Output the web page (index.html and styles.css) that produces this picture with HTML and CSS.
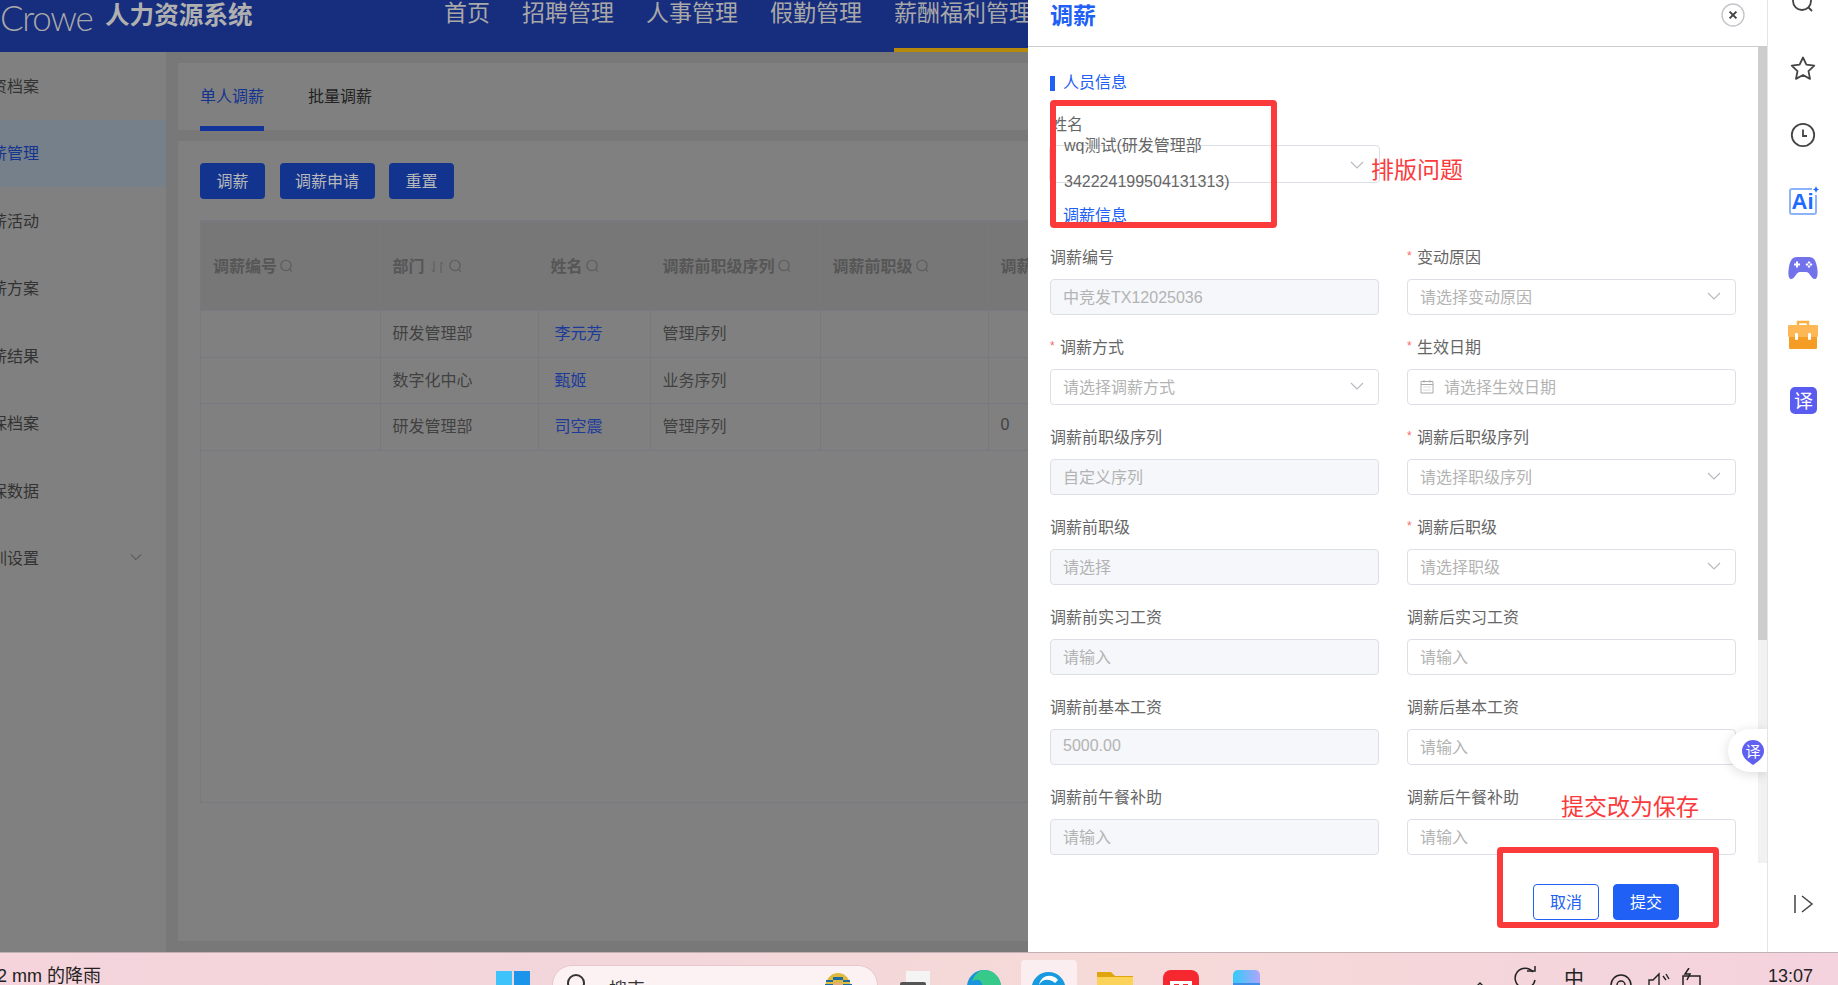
FILE: index.html
```html
<!DOCTYPE html>
<html lang="zh-CN">
<head>
<meta charset="utf-8">
<title>Crowe 人力资源系统</title>
<link rel="stylesheet" href="styles.css">
</head>
<body>
<svg class="defs" width="0" height="0">
  <symbol id="q" viewBox="0 0 14 14"><circle cx="6.500" cy="6" r="4.800" fill="none" stroke="currentColor" stroke-width="1.100"/><path d="M10 9.600l2 2.200" stroke="currentColor" stroke-width="1.100" fill="none"/></symbol>
  <symbol id="chev" viewBox="0 0 14 8"><path d="M1 1l6 6 6-6" fill="none" stroke="currentColor" stroke-width="1.100"/></symbol>
</svg>
<div class="screen">
  <div class="window">
    <div class="app">
      <header class="topbar">
        <div class="logo"><span class="crowe">Crowe</span><span class="sysname">人力资源系统</span></div>
        <nav class="nav">
          <a>首页</a><a>招聘管理</a><a>人事管理</a><a>假勤管理</a><a class="on">薪酬福利管理</a>
        </nav>
      </header>
      <div class="appbody">
        <aside class="side">
          <div class="side-item"><span>工资档案</span></div>
          <div class="side-item on"><span>调薪管理</span></div>
          <div class="side-item"><span>调薪活动</span></div>
          <div class="side-item"><span>调薪方案</span></div>
          <div class="side-item"><span>调薪结果</span></div>
          <div class="side-item"><span>社保档案</span></div>
          <div class="side-item"><span>社保数据</span></div>
          <div class="side-item"><span>培训设置</span><svg class="side-caret" width="12" height="8"><use href="#chev"/></svg></div>
        </aside>
        <main class="content">
          <div class="tabs card">
            <div class="tab on">单人调薪</div>
            <div class="tab">批量调薪</div>
          </div>
          <div class="panel card">
            <div class="actions">
              <button class="btn w65">调薪</button>
              <button class="btn w95">调薪申请</button>
              <button class="btn w65">重置</button>
            </div>
            <div class="tablewrap">
              <table class="grid">
                <colgroup><col class="c1"><col class="c2"><col class="c3"><col class="c4"><col class="c5"><col></colgroup>
                <thead>
                  <tr>
                    <th>调薪编号<svg class="qi"><use href="#q"/></svg></th>
                    <th>部门<svg class="sorti" viewBox="0 0 16 14"><path d="M4 1v11M4 12L1.500 9.500M11 13V2M11 2l2.500 2.500" fill="none" stroke="currentColor"/></svg><svg class="qi"><use href="#q"/></svg></th>
                    <th>姓名<svg class="qi"><use href="#q"/></svg></th>
                    <th>调薪前职级序列<svg class="qi"><use href="#q"/></svg></th>
                    <th>调薪前职级<svg class="qi"><use href="#q"/></svg></th>
                    <th>调薪后职级序列</th>
                  </tr>
                </thead>
                <tbody>
                  <tr><td></td><td>研发管理部</td><td><a class="lnk">李元芳</a></td><td>管理序列</td><td></td><td></td></tr>
                  <tr><td></td><td>数字化中心</td><td><a class="lnk">甄姬</a></td><td>业务序列</td><td></td><td></td></tr>
                  <tr><td></td><td>研发管理部</td><td><a class="lnk">司空震</a></td><td>管理序列</td><td></td><td>0</td></tr>
                </tbody>
              </table>
            </div>
          </div>
        </main>
      </div>
    </div>

    <section class="drawer">
      <div class="drawer-head">
        <h2 class="drawer-title">调薪</h2>
        <svg class="closer" width="24" height="24" viewBox="0 0 24 24"><circle cx="12" cy="12" r="11" fill="#fff" stroke="#c4c6cb" stroke-width="1.400"/><path d="M8.600 8.600l6.800 6.800M15.400 8.600l-6.800 6.800" stroke="#444" stroke-width="2"/></svg>
      </div>
      <div class="drawer-main">
        <div class="form">
          <div class="sec"><i class="sec-bar"></i><span>人员信息</span></div>
          <div class="name-label">姓名</div>
          <div class="name-select">
            <div class="name-value"><span>wq测试(研发管理部</span><span>342224199504131313)</span></div>
            <svg class="chev" width="14" height="8"><use href="#chev"/></svg>
          </div>
          <div class="sec sec2"><span>调薪信息</span></div>
          <div class="fields">
            <div class="field"><label>调薪编号</label><div class="ctl dis">中竞发TX12025036</div></div>
            <div class="field"><label><em>*</em>变动原因</label><div class="ctl sel">请选择变动原因<svg class="chev" width="14" height="8"><use href="#chev"/></svg></div></div>
            <div class="field"><label><em>*</em>调薪方式</label><div class="ctl sel">请选择调薪方式<svg class="chev" width="14" height="8"><use href="#chev"/></svg></div></div>
            <div class="field"><label><em>*</em>生效日期</label><div class="ctl date"><svg class="cal" width="14" height="15" viewBox="0 0 14 15"><path d="M1 2.500h12v11.500H1zM1 5.500h12M4 1v2.500M10 1v2.500" fill="none" stroke="#aaa"/><path d="M3.500 8h7M3.500 11h7" stroke="#bbb" stroke-dasharray="1 1"/></svg>请选择生效日期</div></div>
            <div class="field"><label>调薪前职级序列</label><div class="ctl dis">自定义序列</div></div>
            <div class="field"><label><em>*</em>调薪后职级序列</label><div class="ctl sel">请选择职级序列<svg class="chev" width="14" height="8"><use href="#chev"/></svg></div></div>
            <div class="field"><label>调薪前职级</label><div class="ctl dis">请选择</div></div>
            <div class="field"><label><em>*</em>调薪后职级</label><div class="ctl sel">请选择职级<svg class="chev" width="14" height="8"><use href="#chev"/></svg></div></div>
            <div class="field"><label>调薪前实习工资</label><div class="ctl dis">请输入</div></div>
            <div class="field"><label>调薪后实习工资</label><div class="ctl">请输入</div></div>
            <div class="field"><label>调薪前基本工资</label><div class="ctl dis">5000.00</div></div>
            <div class="field"><label>调薪后基本工资</label><div class="ctl">请输入</div></div>
            <div class="field"><label>调薪前午餐补助</label><div class="ctl dis">请输入</div></div>
            <div class="field"><label>调薪后午餐补助</label><div class="ctl">请输入</div></div>
          </div>
        </div>
        <div class="scroll"><div class="thumb"></div></div>
      </div>
      <div class="drawer-foot">
        <button class="fbtn ghost">取消</button>
        <button class="fbtn primary">提交</button>
      </div>

      <div class="mark mark-name"></div>
      <div class="mark mark-foot"></div>
      <div class="note note-layout">排版问题</div>
      <div class="note note-save">提交改为保存</div>
      <div class="float-tr">
        <svg width="22" height="26" viewBox="0 0 22 26"><path d="M11 0a11 11 0 0 1 11 11c0 6-5 10-11 14C5 21 0 17 0 11A11 11 0 0 1 11 0z" fill="#5f5ff0"/><text x="11" y="17" class="tr-text">译</text></svg>
      </div>
    </section>

    <aside class="rail">
      <div class="rail-cell"><svg width="26" height="26" viewBox="0 0 26 26"><circle cx="12" cy="12" r="9" fill="none" stroke="#444" stroke-width="1.800"/><path d="M18.500 18.500l3.500 3.500" stroke="#444" stroke-width="1.800"/></svg></div>
      <div class="rail-cell"><svg width="26" height="25" viewBox="0 0 26 25"><path d="M13 1.500l3.400 7.200 7.900 1-5.800 5.400 1.500 7.800-7-3.900-7 3.900 1.500-7.800L1.700 9.700l7.900-1z" fill="none" stroke="#444" stroke-width="1.800" stroke-linejoin="round"/></svg></div>
      <div class="rail-cell"><svg width="26" height="26" viewBox="0 0 26 26"><circle cx="13" cy="13" r="11.200" fill="none" stroke="#444" stroke-width="1.800"/><path d="M13 7.500v6.500h4" fill="none" stroke="#444" stroke-width="1.800"/></svg></div>
      <div class="rail-cell"><svg width="31" height="30" viewBox="0 0 31 30"><path d="M24 3H4a2 2 0 0 0-2 2v21a2 2 0 0 0 2 2h22a2 2 0 0 0 2-2V9" fill="none" stroke="#8db4fb" stroke-width="2"/><text x="14.500" y="23" class="ai-text">Ai</text><path d="M28 0l1 2.600 2 .9-2 .9-1 2.600-1-2.600-2-.9 2-.9z" fill="#1f6bff"/></svg></div>
      <div class="rail-cell"><svg width="30" height="24" viewBox="0 0 30 24"><path d="M9 1h12c5 0 7 4 8 10 1 5 1 12-2 12-4 0-5-7-9-7h-6c-4 0-5 7-9 7-3 0-3-7-2-12C2 5 4 1 9 1z" fill="#7272ea"/><path d="M6 8.500h6M9 5.500v6" stroke="#fff" stroke-width="2"/><path d="M21 5l1.500 1.500L21 8l-1.500-1.500zM21 9l1.500 1.500L21 12l-1.500-1.500zM19 7l1.500 1.500L19 10l-1.500-1.500zM23 7l1.500 1.500L23 10l-1.500-1.500z" fill="#fff"/></svg></div>
      <div class="rail-cell"><svg width="30" height="29" viewBox="0 0 30 29"><path d="M10 6V2h10v4" fill="none" stroke="#fbb040" stroke-width="2.400"/><rect x="1" y="13" width="28" height="16" rx="1.500" fill="#f59c25"/><rect y="5" width="30" height="12" rx="1" fill="#fdb855"/><rect x="7" y="13" width="3" height="7" rx="1" fill="#fff"/><rect x="20" y="13" width="3" height="7" rx="1" fill="#fff"/></svg></div>
      <div class="rail-cell"><svg width="27" height="27" viewBox="0 0 27 27"><rect width="27" height="27" rx="5" fill="#5a5cf0"/><text x="13.500" y="20.500" class="tr-big">译</text></svg></div>
      <svg class="rail-collapse" width="20" height="18" viewBox="0 0 20 18"><path d="M1 0v18M8 1l10 8-10 8" fill="none" stroke="#444" stroke-width="1.500"/></svg>
    </aside>
  </div>

  <footer class="taskbar">
    <div class="weather"><span>2 mm 的降雨</span></div>
    <svg class="tb win" width="34" height="24" viewBox="0 0 34 24"><rect width="16" height="24" fill="#3fc3fb"/><rect x="18" width="16" height="24" fill="#1b95ea"/></svg>
    <div class="tb search">
      <svg width="20" height="24" viewBox="0 0 20 24"><circle cx="10" cy="12" r="8" fill="none" stroke="#333" stroke-width="2"/></svg>
      <span class="search-txt">搜索</span>
      <svg class="pharaoh" width="42" height="24" viewBox="0 0 42 24"><path d="M3 24C3 8 9 1 17 1s14 7 14 23z" fill="#e0b93f"/><path d="M5 9h7M22 9h7M4 13h8M22 13h9M3 17h9M22 17h10M3 21h9M22 21h10" stroke="#1f6a9e" stroke-width="2"/><circle cx="17" cy="16" r="6" fill="#e2ad7c"/><path d="M12 5h10v3H12z" fill="#1f6a9e"/><circle cx="37" cy="21" r="3.500" fill="#2f8f9c"/></svg>
    </div>
    <svg class="tb stack" width="34" height="24" viewBox="0 0 34 24"><rect x="6" width="24" height="24" fill="#f4f4f4"/><rect y="11" width="26" height="13" rx="2" fill="#555"/></svg>
    <svg class="tb edge1" width="34" height="24" viewBox="0 0 34 24"><circle cx="17" cy="17" r="17" fill="#1a94dc"/><path d="M17 0a17 17 0 0 1 17 17H16C14 8 10 9 5 11 8 4 12 0 17 0z" fill="#36c98a"/></svg>
    <div class="tb tile">
      <svg width="35" height="14" viewBox="0 0 35 14"><circle cx="17.500" cy="17" r="17" fill="#189ae0"/><path d="M8 13c3-6 10-7 16-2l3-3c-6-7-17-5-19 5z" fill="#fff"/></svg>
    </div>
    <svg class="tb folder" width="36" height="24" viewBox="0 0 36 24"><path d="M0 0h14l4 4h18v20H0z" fill="#dfa50d"/><rect y="5" width="36" height="19" fill="#fbd35b"/></svg>
    <svg class="tb red" width="36" height="24" viewBox="0 0 36 24"><path d="M0 24V8a8 8 0 0 1 8-8h20a8 8 0 0 1 8 8v16z" fill="#f5282f"/><path d="M7 11h22v13h-4V14h-5v10h-4V14h-5v10H7z" fill="#fff"/></svg>
    <svg class="tb blue" width="27" height="24" viewBox="0 0 27 24"><defs><linearGradient id="bg" x1="0" x2="1"><stop offset="0" stop-color="#31cbfa"/><stop offset="1" stop-color="#b0a4fb"/></linearGradient></defs><path d="M0 24V5a5 5 0 0 1 5-5h17a5 5 0 0 1 5 5v19z" fill="url(#bg)"/><rect y="13" width="27" height="11" fill="#3e8ee8"/></svg>
    <div class="tray">
      <svg width="12" height="8" viewBox="0 0 12 8"><path d="M1 7l5-5 5 5" fill="none" stroke="#222" stroke-width="1.400"/></svg>
      <svg class="t-refresh" width="24" height="24" viewBox="0 0 24 24"><path d="M20 6A10 10 0 1 0 22 14" fill="none" stroke="#222" stroke-width="1.500"/><path d="M14 5h8V0" fill="none" stroke="#222" stroke-width="1.500"/></svg>
      <span class="t-ime">中</span>
      <svg class="t-wifi" width="22" height="20" viewBox="0 0 22 20"><circle cx="11" cy="12" r="10" fill="none" stroke="#222" stroke-width="1.500"/><circle cx="11" cy="12" r="4" fill="none" stroke="#222" stroke-width="1.500"/></svg>
      <svg class="t-vol" width="22" height="20" viewBox="0 0 22 20"><path d="M1 9h4l6-6v17l-6-5H1zM15 5l3 4M18 3l3 5" fill="none" stroke="#222" stroke-width="1.400"/></svg>
      <svg class="t-bat" width="20" height="22" viewBox="0 0 20 22"><path d="M1 8h17v14H1zM7 0L3 6h5l-3 6" fill="none" stroke="#222" stroke-width="1.500"/></svg>
    </div>
    <div class="clock">13:07</div>
  </footer>
</div>
</body>
</html>
```
FILE: styles.css
```css
* { box-sizing: border-box; }
html, body { margin: 0; padding: 0; }
body {
  width: 1838px;
  height: 985px;
  overflow: hidden;
  font-family: "Liberation Sans", "Noto Sans CJK SC", sans-serif;
  font-size: 16px;
  color: #666;
  background: #fff;
}
.defs { position: absolute; }
.screen { display: flex; flex-direction: column; height: 985px; }
.window { display: flex; height: 952px; flex: none; }

/* dimmed application */
.app { width: 1028px; flex: none; display: flex; flex-direction: column; overflow: hidden; background: #787878; }
.topbar { height: 52px; flex: none; display: flex; background: #172d7d; color: #a8a8a8; }
.logo { width: 444px; flex: none; display: flex; align-items: flex-start; white-space: nowrap; }
.crowe { font-family: Lato, "Liberation Sans", sans-serif; font-weight: 300; font-size: 35px; line-height: 34px; width: 105px; color: #a8a8a8; letter-spacing: -1.300px; }
.sysname { font-size: 24.600px; line-height: 32px; font-weight: 700; color: #b0b0b0; }
.nav { display: flex; gap: 32px; white-space: nowrap; }
.nav a { display: block; font-size: 23px; line-height: 26px; height: 52px; color: #a8a8a8; }
.nav a.on { border-bottom: 4px solid #b58a0c; }

.appbody { flex: 1; display: flex; min-height: 0; }
.side { width: 166px; flex: none; background: #808080; color: #333; }
.side-item { height: 67.500px; padding-bottom: 2px; display: flex; align-items: center; white-space: nowrap; }
.side-item span { margin-left: -25px; }
.side-item.on { background: #76808a; color: #15348f; }
.side-caret { margin-left: 91px; color: #444; }

.content { width: 900px; flex: none; padding: 11px 0 11px 12px; display: flex; flex-direction: column; gap: 11px; }
.card { background: #808080; }
.tabs { height: 67px; flex: none; display: flex; gap: 44px; padding-left: 22px; color: #222; }
.tab { height: 68px; padding-top: 23px; line-height: 22px; }
.tab.on { color: #15348f; border-bottom: 5px solid #12349a; }
.panel { flex: 1; padding: 22px 0 0 22px; }
.actions { display: flex; gap: 14.500px; }
.btn { height: 36px; border: 0; border-radius: 4px; background: #12348f; color: #b8b8b8; font: inherit; padding: 0 0 2px; }
.w65 { width: 65px; }
.w95 { width: 95px; }
.tablewrap { margin-top: 21px; height: 583px; border: 1px solid #777880; width: 860px; }
.grid { table-layout: fixed; width: 100%; border-collapse: collapse; }
.c1 { width: 179px; }
.c2 { width: 158px; }
.c3 { width: 112px; }
.c4 { width: 170px; }
.c5 { width: 168px; }
.grid th, .grid td { padding: 0 0 3px 12px; text-align: left; white-space: nowrap; overflow: hidden; border: 1px solid #777880; }
.grid tr > :first-child { border-left: 0; }
.grid thead tr { height: 89px; }
.grid th { background: #777; font-weight: 700; color: #565656; }
.grid tbody tr { height: 46.500px; }
.grid td { color: #414141; }
.qi { width: 15px; height: 15px; margin-left: 2px; vertical-align: -2px; color: #5c5c5c; }
.sorti { width: 16px; height: 14px; margin-left: 5px; vertical-align: -2px; color: #5c5c5c; }
.lnk { color: #1c3a9a; margin-left: 4px; }

/* drawer */
.drawer { width: 739px; flex: none; position: relative; background: #fff; display: flex; flex-direction: column; overflow: hidden; }
.drawer-head { height: 47px; flex: none; display: flex; justify-content: space-between; align-items: flex-start; padding: 3px 22px 0; border-bottom: 1px solid #ccc; }
.drawer-title { margin: -2px 0 0; font-size: 23px; line-height: 30px; font-weight: 700; color: #2060f5; }
.drawer-main { height: 816px; flex: none; display: flex; }
.form { flex: 1; min-width: 0; overflow: hidden; padding: 28px 22px 0; }
.scroll { width: 9px; flex: none; background: #f1f1f1; }
.thumb { height: 593px; background: #cdcdcd; }
.sec { display: flex; align-items: center; height: 16px; color: #2060f5; line-height: 16px; }
.sec-bar { flex: none; width: 5px; height: 15px; margin-right: 8px; background: #2060f5; }
.name-label { margin: 23px 0 0 1px; line-height: 22px; }
.name-select { margin: 9px 0 0 -1px; width: 331px; height: 38px; border: 1px solid #dcdfe6; border-radius: 4px; padding: 0 15px 0 14px; display: flex; align-items: flex-start; justify-content: space-between; }
.name-select .chev { margin-top: 15px; }
.name-value { margin-top: -18px; line-height: 35.500px; white-space: nowrap; }
.name-value span { display: block; }
.chev { color: #b5b8be; flex: none; }
.sec2 { margin: 25px 0 0 13px; }
.fields { display: grid; grid-template-columns: 329px 329px; column-gap: 28px; row-gap: 22px; margin-top: 23px; }
.field label { display: block; line-height: 22px; margin-bottom: 10px; white-space: nowrap; color: #666; }
.field em { font-style: normal; font-size: 12px; color: #f56c6c; display: inline-block; width: 10px; vertical-align: 3px; line-height: 12px; }
.ctl { height: 36px; border: 1px solid #dcdfe6; border-radius: 4px; padding: 0 14px 2px 12px; display: flex; align-items: center; color: #b3b3b3; white-space: nowrap; }
.ctl.dis { background: #f5f7fa; }
.ctl.sel { justify-content: space-between; }
.ctl.date { gap: 10px; }
.cal { flex: none; }
.drawer-foot { flex: 1; position: relative; z-index: 2; display: flex; justify-content: flex-end; gap: 14px; padding: 21px 88px 0 0; }
.fbtn { width: 66px; height: 36px; border-radius: 4px; font: inherit; padding: 0 0 3px; }
.ghost { background: #fff; border: 1px solid #2060f5; color: #2060f5; }
.primary { background: #2060f5; border: 1px solid #2060f5; color: #fff; }

/* annotations over the form */
.mark { position: absolute; border: 6px solid #fb3a3c; border-radius: 4px; }
.mark-name { left: 22px; top: 100px; width: 227px; height: 128px; }
.mark-foot { left: 469px; top: 847px; width: 222px; height: 81px; background: #fff; z-index: 1; }
.note { position: absolute; font-size: 23px; line-height: 30px; color: #fb3a3c; white-space: nowrap; z-index: 3; }
.note-layout { left: 343px; top: 155px; }
.note-save { left: 533px; top: 792px; }
.float-tr { position: absolute; left: 700px; top: 729px; width: 39px; height: 43px; border-radius: 22px 0 0 22px; background: #fff; box-shadow: 0 2px 12px rgba(0,0,0,.14); display: flex; align-items: center; padding: 4px 0 0 14px; }
.tr-text { font-size: 15px; fill: #fff; text-anchor: middle; font-family: "Noto Sans CJK SC", sans-serif; }
.tr-big { font-size: 19px; fill: #fff; text-anchor: middle; font-family: "Noto Sans CJK SC", sans-serif; }
.ai-text { font-size: 22px; font-weight: 700; fill: #1f6bff; text-anchor: middle; }

/* right rail */
.rail { width: 71px; flex: none; border-left: 1px solid #e4e4e4; background: #fff; display: flex; flex-direction: column; overflow: hidden; }
.rail-cell { height: 66.400px; flex: none; display: flex; align-items: center; justify-content: center; }
.rail-cell:first-child { margin-top: -31px; }
.rail-collapse { margin: auto 0 39px 26px; flex: none; }

/* taskbar */
.taskbar { height: 33px; flex: none; display: flex; align-items: flex-start; overflow: hidden; border-top: 1px solid #c2b1b3; background: linear-gradient(90deg, #f5d4dc 0%, #f2d6da 35%, #f6dad8 60%, #f4d2de 100%); color: #222; }
.weather { width: 496px; flex: none; padding-top: 11px; font-size: 18px; line-height: 24px; white-space: nowrap; }
.weather span { margin-left: -3px; }
.tb { flex: none; }
.win { margin-top: 18px; }
.search { margin: 12px 0 0 22px; width: 326px; height: 40px; padding: 5px 0 0 13px; border: 1px solid #e8c6cb; border-radius: 20px; background: #fdf2f3; display: flex; align-items: flex-start; }
.search-txt { font-size: 18px; line-height: 26px; margin: 6px 0 0 23px; color: #333; }
.pharaoh { margin: 1px 14px 0 auto; }
.stack { margin: 18px 0 0 22px; }
.edge1 { margin: 17px 0 0 33px; }
.tile { margin: 7px 0 0 20px; width: 56px; height: 30px; padding: 12px 0 0 10px; background: #fbeef1; border-radius: 4px; }
.tile svg { display: block; }
.folder { margin: 19px 0 0 20px; }
.red { margin: 17px 0 0 30px; }
.blue { margin: 17px 0 0 34px; }
.tray { display: flex; align-items: flex-start; margin-left: 214px; }
.tray svg { flex: none; }
.tray > svg:first-child { margin-top: 28px; }
.t-refresh { margin: 13px 0 0 27px; }
.t-ime { margin: 12px 0 0 27px; font-size: 20px; line-height: 28px; }
.t-wifi { margin: 20px 0 0 26px; }
.t-vol { margin: 18px 0 0 16px; }
.t-bat { margin: 15px 0 0 12px; }
.clock { margin: 11px 0 0 66px; font-size: 18px; line-height: 24px; color: #222; white-space: nowrap; }
```
